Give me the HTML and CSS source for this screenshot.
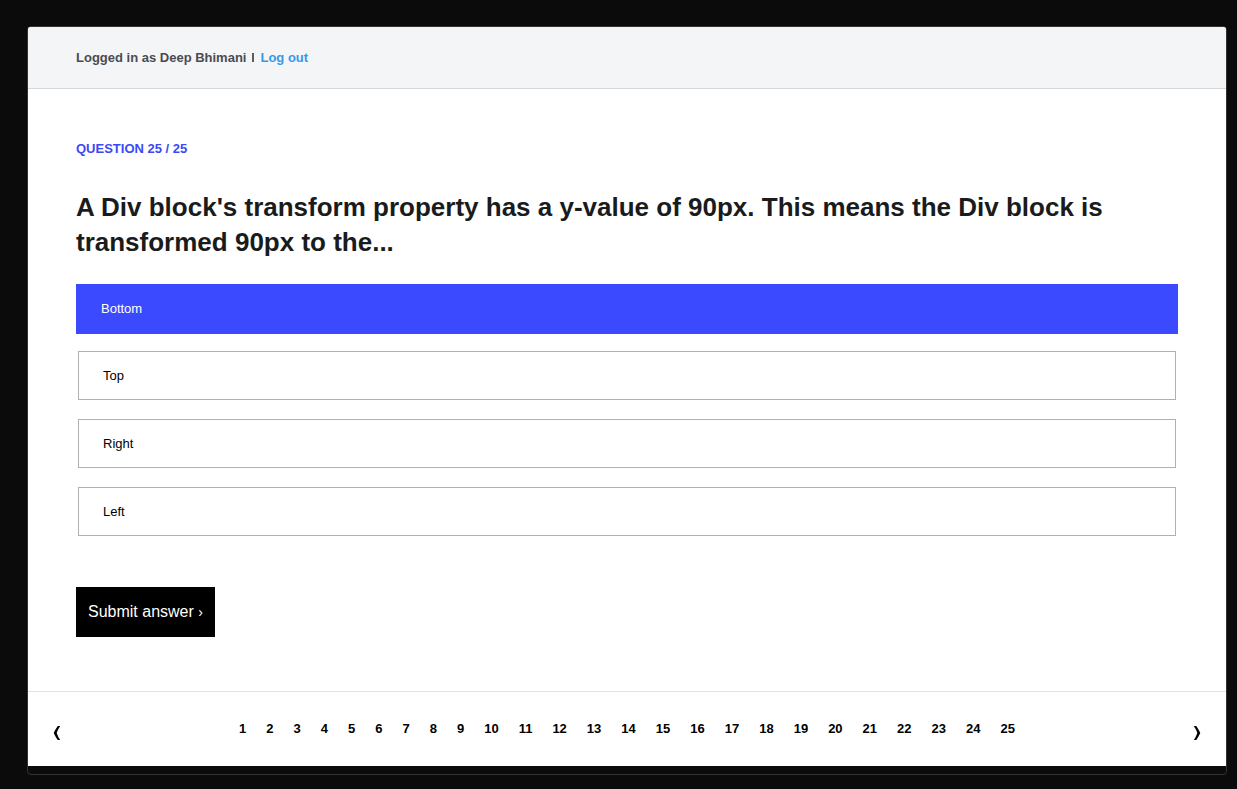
FILE: index.html
```html
<!DOCTYPE html>
<html lang="en">
<head>
<meta charset="utf-8">
<title>Question 25 / 25</title>
<link rel="stylesheet" href="styles.css">
</head>
<body>
<div class="frame">
  <header class="topbar">
    <span>Logged in as Deep Bhimani</span>
    <span class="divider"></span>
    <a class="logout" href="#">Log out</a>
  </header>
  <main class="quiz">
    <p class="counter">QUESTION 25 / 25</p>
    <form>
      <h1 class="question" id="question">A Div block's transform property has a y-value of 90px. This means the Div block is transformed 90px to the...</h1>
      <div class="options" role="radiogroup" aria-labelledby="question">
        <label class="option selected"><input class="radio" type="radio" name="answer" checked>Bottom</label>
        <label class="option"><input class="radio" type="radio" name="answer">Top</label>
        <label class="option"><input class="radio" type="radio" name="answer">Right</label>
        <label class="option"><input class="radio" type="radio" name="answer">Left</label>
      </div>
      <button class="submit" type="button">Submit answer <span class="chevron">›</span></button>
    </form>
  </main>
  <nav class="pager" aria-label="Questions">
    <button class="arrow" type="button" aria-label="Previous question">
      <svg width="8" height="16" viewBox="0 0 8 16"><path d="M4.700 1H7.200Q4.800 4.500 3.700 8Q4.800 11.500 7.200 15H4.700Q2.300 11.500 .7 8Q2.300 4.500 4.700 1Z"/></svg>
    </button>
    <div class="pages">
      <a href="#">1</a><a href="#">2</a><a href="#">3</a><a href="#">4</a><a href="#">5</a><a href="#">6</a><a href="#">7</a><a href="#">8</a><a href="#">9</a><a href="#">10</a><a href="#">11</a><a href="#">12</a><a href="#">13</a><a href="#">14</a><a href="#">15</a><a href="#">16</a><a href="#">17</a><a href="#">18</a><a href="#">19</a><a href="#">20</a><a href="#">21</a><a href="#">22</a><a href="#">23</a><a href="#">24</a><a href="#">25</a>
    </div>
    <button class="arrow" type="button" aria-label="Next question">
      <svg width="8" height="16" viewBox="0 0 8 16"><path d="M3.300 1H.8Q3.200 4.500 4.300 8Q3.200 11.500 .8 15H3.300Q5.700 11.500 7.300 8Q5.700 4.500 3.300 1Z"/></svg>
    </button>
  </nav>
</div>
</body>
</html>
```
FILE: styles.css
```css
* { box-sizing: border-box; }
body {
  margin: 0;
  padding: 26px 10px 14px 27px;
  background: #0b0b0b;
  color: #000;
  font: 13px/20px "Liberation Sans", Arial, sans-serif;
}
.frame {
  padding-bottom: 8px;
  border: 1px solid #333;
  border-radius: 4px;
}
.topbar {
  display: flex;
  align-items: center;
  padding: 21px 48px 20px;
  border-bottom: 1px solid #d5d6d8;
  border-radius: 2px 2px 0 0;
  background: #f4f5f7;
  color: #4b4b52;
  font-weight: bold;
}
.divider {
  width: 2px;
  height: 9px;
  margin: 0 6px 2px;
  background: #5c5c63;
}
.logout { color: #3898ec; text-decoration: none; }
.quiz { padding: 50px 48px 54px; background: #fff; }
.counter { margin: 0; color: #3b49f5; font-weight: bold; }
.question {
  margin: 31px 0 24px;
  color: #1a1b1c;
  font-size: 26px;
  line-height: 35px;
}
.options { display: grid; gap: 19px; }
.option {
  display: flex;
  align-items: center;
  min-height: 49px;
  margin: 0 2px;
  padding: 0 24px;
  border: 1px solid #b0b0b0;
}
.option.selected {
  min-height: 50px;
  margin: 0 0 -2px;
  border-color: #3b49ff;
  background: #3b49ff;
  color: #fff;
}
.radio { appearance: none; width: 0; height: 0; margin: 0; }
.submit {
  display: block;
  margin-top: 51px;
  padding: 15px 12px;
  border: 0;
  background: #000;
  color: #fff;
  font: 16px/20px "Liberation Sans", Arial, sans-serif;
}
.chevron { font-size: 14px; }
.pager {
  display: flex;
  justify-content: space-between;
  align-items: flex-start;
  padding: 27px 25px 25px;
  border-top: 1px solid #dfe5e5;
  background: #fff;
}
.pages { display: flex; }
.pages a {
  padding: 0 10px;
  color: #000;
  font-weight: bold;
  text-decoration: none;
}
.arrow {
  display: flex;
  margin-top: 6px;
  padding: 0;
  border: 0;
  background: none;
}
```
